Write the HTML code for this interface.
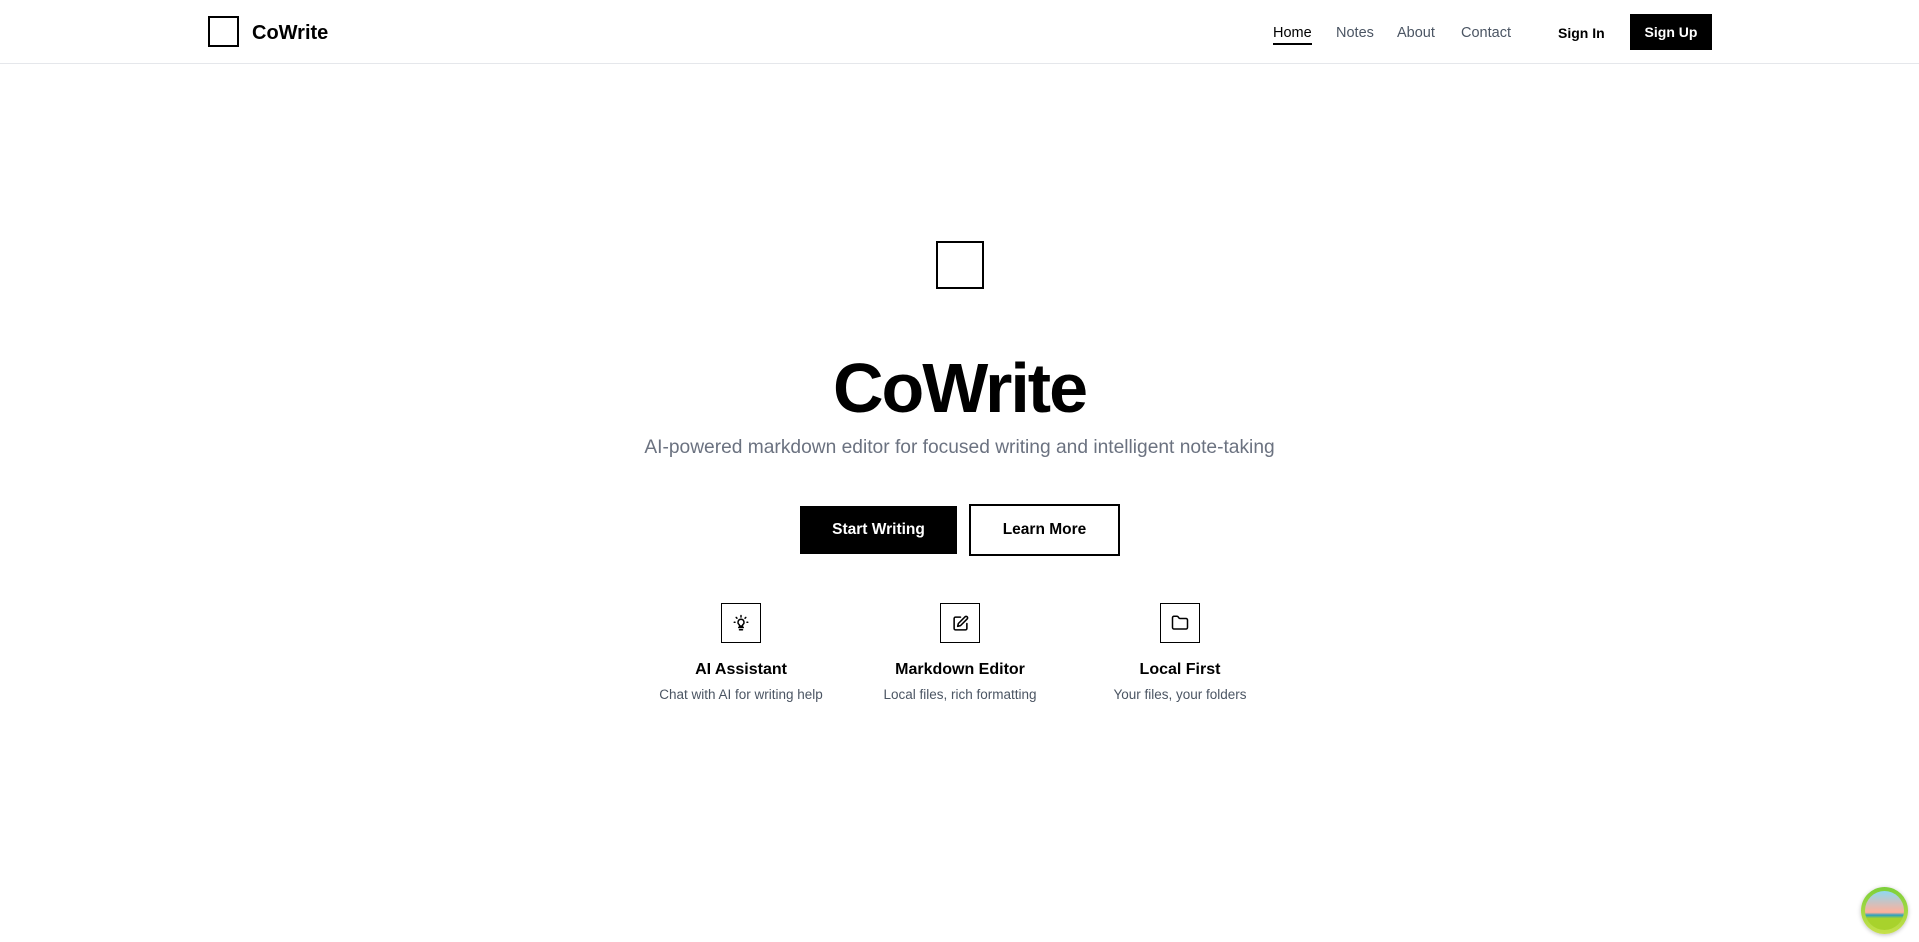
<!DOCTYPE html>
<html><head><meta charset="utf-8"><style>
*{margin:0;padding:0;box-sizing:border-box}
body{width:1919px;height:942px;background:#fff;font-family:"Liberation Sans",sans-serif;color:#000;position:relative;overflow:hidden}
.hdr{position:absolute;left:0;top:0;width:1919px;height:64px;border-bottom:1px solid #e5e7eb}
.abs{position:absolute}
.nav{font-size:14.5px;color:#4b5563;top:25px}
.feat{position:absolute;width:220px;text-align:center}
.feat .ib{width:40px;height:40px;border:1.5px solid #000;margin:0 auto;display:flex;align-items:center;justify-content:center}
.feat h3{font-size:16px;font-weight:bold;margin-top:18px}
.feat p{font-size:13.5px;color:#4b5563;margin-top:8px}
</style></head><body>
<div class="hdr">
  <div class="abs" style="left:208px;top:16px;width:31px;height:31px;border:2px solid #000"></div>
  <div class="abs" style="left:252px;top:22px;font-size:20px;font-weight:bold">CoWrite</div>
  <div class="abs nav" style="left:1273px;color:#000">Home</div>
  <div class="abs" style="left:1273px;top:43px;width:39px;height:2px;background:#000"></div>
  <div class="abs nav" style="left:1336px">Notes</div>
  <div class="abs nav" style="left:1397px">About</div>
  <div class="abs nav" style="left:1461px">Contact</div>
  <div class="abs nav" style="left:1558px;color:#000;font-weight:bold;font-size:14px">Sign In</div>
  <div class="abs" style="left:1630px;top:14px;width:82px;height:36px;background:#000;color:#fff;font-weight:bold;font-size:14px;display:flex;align-items:center;justify-content:center">Sign Up</div>
</div>
<div class="abs" style="left:936px;top:241px;width:48px;height:48px;border:2px solid #000"></div>
<div class="abs" style="left:0;width:1919px;top:346px;text-align:center;font-size:70px;font-weight:bold;letter-spacing:-2px;line-height:84px">CoWrite</div>
<div class="abs" style="left:0;width:1919px;top:437px;text-align:center;font-size:19.2px;color:#6b7280;font-weight:300">AI-powered markdown editor for focused writing and intelligent note-taking</div>
<div class="abs" style="left:800px;top:506px;width:157px;height:48px;background:#000;color:#fff;font-weight:bold;font-size:15.5px;display:flex;align-items:center;justify-content:center">Start Writing</div>
<div class="abs" style="left:969px;top:504px;width:151px;height:52px;border:2px solid #000;font-weight:bold;font-size:15.5px;display:flex;align-items:center;justify-content:center">Learn More</div>
<div class="feat" style="left:631px;top:603px"><div class="ib"><svg width="18" height="18" viewBox="0 0 24 24" fill="none" stroke="#000" stroke-width="2" stroke-linecap="round"><path d="M9 18h6M10 21h4M12 7a4 4 0 0 0-2.5 7.1c.5.5.5 1 .5 1.9h4c0-.9 0-1.4.5-1.9A4 4 0 0 0 12 7zM12 2v2M4 11H3M21 11h-1M5.6 4.6l1 1M18.4 4.6l-1 1"/></svg></div><h3>AI Assistant</h3><p>Chat with AI for writing help</p></div>
<div class="feat" style="left:850px;top:603px"><div class="ib"><svg width="17" height="17" viewBox="0 0 24 24" fill="none" stroke="#000" stroke-width="2.2" stroke-linecap="round" stroke-linejoin="round"><path d="M12 3H5a2 2 0 0 0-2 2v14a2 2 0 0 0 2 2h14a2 2 0 0 0 2-2v-7"/><path d="M18.4 2.6a2.1 2.1 0 0 1 3 3L12 15l-4 1 1-4z"/></svg></div><h3>Markdown Editor</h3><p>Local files, rich formatting</p></div>
<div class="feat" style="left:1070px;top:603px"><div class="ib"><svg width="18" height="18" viewBox="0 0 24 24" fill="none" stroke="#000" stroke-width="2" stroke-linejoin="round"><path d="M20 20a2 2 0 0 0 2-2V8a2 2 0 0 0-2-2h-7.9a2 2 0 0 1-1.7-.9l-.8-1.2A2 2 0 0 0 7.9 3H4a2 2 0 0 0-2 2v13a2 2 0 0 0 2 2z"/></svg></div><h3>Local First</h3><p>Your files, your folders</p></div>
<div class="abs" style="left:1861px;top:887px;width:47px;height:47px;border-radius:50%;background:linear-gradient(#7ccf3a,#c7e04a);box-shadow:0 1px 4px rgba(0,0,0,.25)">
  <div style="position:absolute;left:4px;top:4px;width:39px;height:39px;border-radius:50%;background:linear-gradient(#8fd8f0,#ffb09a 55%,#2aa0c0 62%,#a8d22c 70%)"></div>
</div>
</body></html>
